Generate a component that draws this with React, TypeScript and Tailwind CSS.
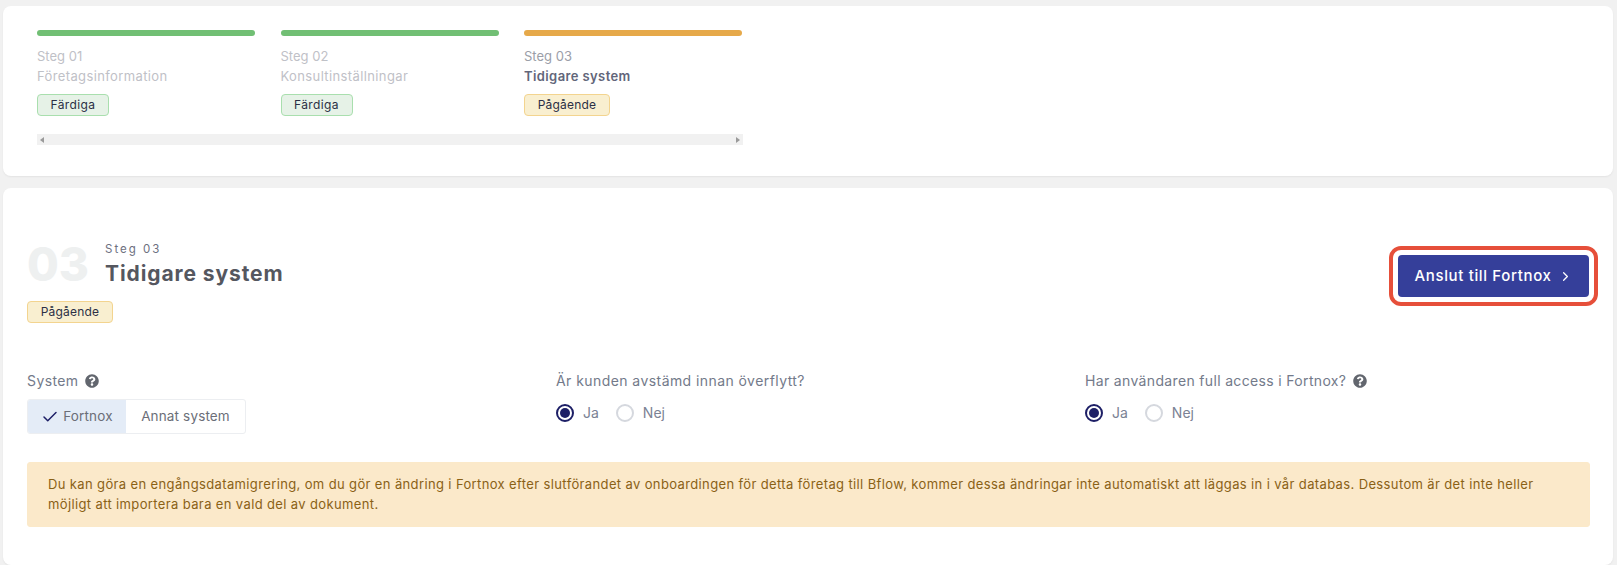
import { Check, ChevronRight } from 'lucide-react';
import { FaQuestionCircle } from 'react-icons/fa';

const font = "font-['Inter','Noto_Sans',sans-serif]";

const steps = [
  { step: 'Steg 01', name: 'Företagsinformation', status: 'Färdiga', done: true },
  { step: 'Steg 02', name: 'Konsultinställningar', status: 'Färdiga', done: true },
  { step: 'Steg 03', name: 'Tidigare system', status: 'Pågående', done: false },
];

function Badge({ label, done }: { label: string; done: boolean }) {
  return (
    <span
      className={
        done
          ? 'flex h-[22px] w-[72px] items-center justify-center rounded-[4px] border border-[#a9dfae] bg-[#e6f2e7] text-[12px] tracking-[0.4px] text-[#2b2f45]'
          : 'flex h-[22px] w-[86px] items-center justify-center rounded-[4px] border border-[#f3d48f] bg-[#f9efd0] text-[12px] tracking-[0.2px] text-[#2b2f45]'
      }
    >
      {label}
    </span>
  );
}

function Radio({ label, checked }: { label: string; checked?: boolean }) {
  return (
    <span className="flex items-center gap-[9px] text-[14px] text-[#7b8294]">
      {checked ? (
        <span className="flex h-[18px] w-[18px] items-center justify-center rounded-full border-[2px] border-[#1d1f66]">
          <span className="h-[10px] w-[10px] rounded-full bg-[#1d1f66]" />
        </span>
      ) : (
        <span className="h-[18px] w-[18px] rounded-full border-[2px] border-[#d5d8de]" />
      )}
      {label}
    </span>
  );
}

function YesNo() {
  return (
    <div className="mt-[11px] flex items-center gap-[17px]">
      <Radio label="Ja" checked />
      <Radio label="Nej" />
    </div>
  );
}

export default function App() {
  return (
    <div className={`${font} flex h-[565px] flex-col gap-[12px] overflow-hidden bg-[#f1f1f1] pl-[3px] pr-[4px] pt-[6px]`}>
      {/* Stepper */}
      <section className="h-[170px] shrink-0 rounded-[8px] bg-white pl-[34px] pt-[24px] shadow-[0_1px_2px_rgba(0,0,0,0.06)]">
        <div className="w-[706px]">
          <div className="flex gap-[25.5px]">
            {steps.map((s) => (
              <div key={s.step} className="w-[218px]">
                <div className={s.done ? 'h-[6px] rounded-full bg-[#71bf74]' : 'h-[6px] rounded-full bg-[#e6a94a]'} />
                <p className={s.done ? 'mt-[10px] text-[13px] leading-[20px] text-[#bfc1c7]' : 'mt-[10px] text-[13px] leading-[20px] text-[#9b9ea8]'}>
                  {s.step}
                </p>
                <p className={s.done ? 'text-[13px] leading-[20px] tracking-[0.38px] text-[#bfc1c7]' : 'text-[13px] font-semibold leading-[20px] tracking-[0.4px] text-[#62667a]'}>
                  {s.name}
                </p>
                <div className="mt-[8px]">
                  <Badge label={s.status} done={s.done} />
                </div>
              </div>
            ))}
          </div>
          {/* Scrollbar */}
          <div className="mt-[18px] flex h-[11px] items-center justify-between bg-[#f1f1f1] px-[3px]">
            <span className="h-0 w-0 border-y-[3px] border-r-[4px] border-y-transparent border-r-[#9a9a9a]" />
            <span className="h-0 w-0 border-y-[3px] border-l-[4px] border-y-transparent border-l-[#9a9a9a]" />
          </div>
        </div>
      </section>

      {/* Current step */}
      <section className="flex-1 rounded-[8px] bg-white pl-[24px] pr-[23px] pt-[51px] shadow-[0_1px_2px_rgba(0,0,0,0.06)]">
        <div className="flex items-start justify-between">
          <div>
            <div className="flex items-center gap-[16px]">
              <span className="text-[46px] font-extrabold leading-[50px] text-[#eef0f0]">03</span>
              <div>
                <p className="text-[11.5px] leading-[14px] tracking-[2px] text-[#6d7080]">Steg 03</p>
                <h2 className="mt-[5px] text-[21px] font-bold leading-[26px] tracking-[0.9px] text-[#55575f]">Tidigare system</h2>
              </div>
            </div>
            <div className="mt-[12px]">
              <Badge label="Pågående" done={false} />
            </div>
          </div>
          <div className="-mr-[8px] mt-[7px] rounded-[12px] border-[4px] border-[#e64f3a] p-[5px]">
            <button className="flex h-[42px] w-[191px] items-center justify-center gap-[6px] rounded-[4px] bg-[#353f9a] text-[15px] font-medium tracking-[0.65px] text-white">
              Anslut till Fortnox
              <ChevronRight className="h-[15px] w-[15px]" strokeWidth={2} />
            </button>
          </div>
        </div>

        <div className="mt-[48px] grid grid-cols-3 gap-[24px]">
          <div>
            <div className="flex items-center gap-[6px] text-[14px] leading-[20px] tracking-[0.4px] text-[#737a8a]">
              System
              <FaQuestionCircle className="h-[14px] w-[14px] text-[#62666e]" />
            </div>
            <div className="mt-[8px] flex h-[35px] w-[219px] overflow-hidden rounded-[3px] border border-[#eceef1] text-[13.5px] tracking-[0.15px] text-[#6b6e78]">
              <span className="flex w-[98px] items-center justify-center gap-[4px] bg-[#e4ecf7]">
                <Check className="h-[18px] w-[18px] text-[#1d1f66]" strokeWidth={2} />
                Fortnox
              </span>
              <span className="flex flex-1 items-center justify-center">Annat system</span>
            </div>
          </div>
          <div>
            <div className="text-[14px] leading-[20px] tracking-[0.43px] text-[#737a8a]">Är kunden avstämd innan överflytt?</div>
            <YesNo />
          </div>
          <div>
            <div className="flex items-center gap-[7px] text-[14px] leading-[20px] tracking-[0.34px] text-[#737a8a]">
              Har användaren full access i Fortnox?
              <FaQuestionCircle className="h-[14px] w-[14px] text-[#62666e]" />
            </div>
            <YesNo />
          </div>
        </div>

        <div className="mt-[28px] rounded-[3px] border border-[#fbe9c9] bg-[#fbe9ca] px-[20px] pb-[12px] pt-[11px] text-[13px] leading-[20px] tracking-[0.37px] text-[#8a6116]">
          Du kan göra en engångsdatamigrering, om du gör en ändring i Fortnox efter slutförandet av onboardingen för detta företag till Bflow, kommer dessa ändringar inte automatiskt att läggas in i vår databas. Dessutom är det inte heller möjligt att importera bara en vald del av dokument.
        </div>
      </section>
    </div>
  );
}
